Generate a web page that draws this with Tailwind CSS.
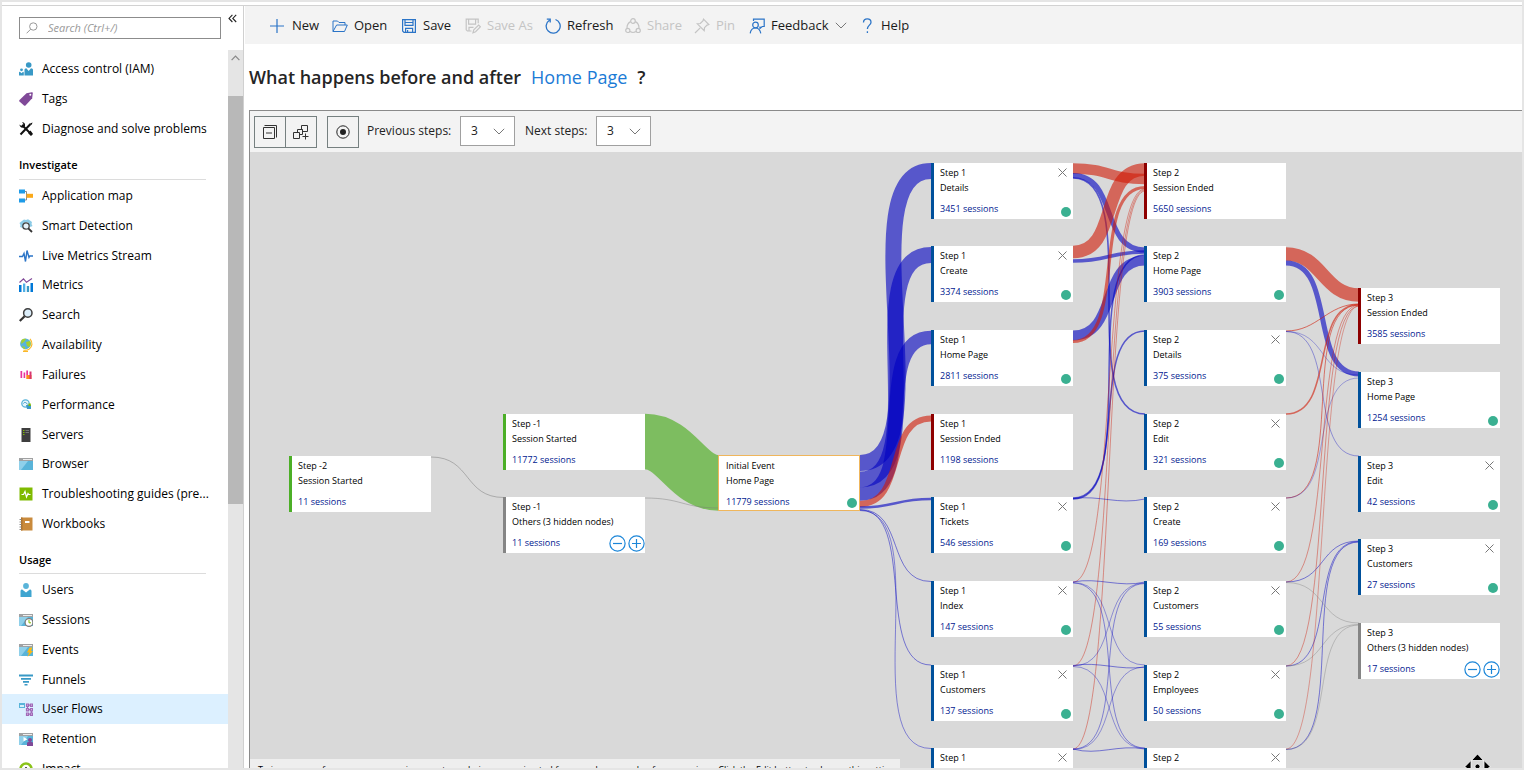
<!DOCTYPE html>
<html lang="en">
<head>
<meta charset="utf-8">
<title>User Flows</title>
<script src="https://cdn.jsdelivr.net/npm/@tailwindcss/browser@4"></script>
</head>
<body class="h-screen overflow-hidden bg-white text-black font-['Open_Sans','Noto_Sans',sans-serif]">
<div class="flex h-full flex-col border-2 border-[#e5e5e5]">
<div class="flex min-h-0 flex-1 flex-col pt-[3px]">
<div class="flex min-h-0 flex-1 border-t border-[#d2d2d2]">

<!-- Sidebar -->
<aside class="flex w-[242px] shrink-0 flex-col border-r border-[#d0d0d0]">
  <div class="flex h-11 shrink-0 items-start">
    <label class="mt-[11px] ml-[17px] flex h-[22px] w-[202px] items-center border border-[#8c8c8c] pl-1.5">
      <svg class="size-3 shrink-0" viewBox="0 0 12 12" fill="none" stroke="#999"><circle cx="7.3" cy="4.5" r="3.7"/><path d="M4.7 7.2L.6 11.3"/></svg>
      <input type="text" aria-label="Search" placeholder="Search (Ctrl+/)" class="ml-2.5 w-full min-w-0 text-[11px] italic outline-none placeholder:text-[#999]">
    </label>
    <button aria-label="Collapse menu" class="mt-2 ml-[7px]"><svg class="size-[9px]" viewBox="0 0 9 9" fill="none" stroke="#222" stroke-width="1.1"><path d="M4.4 .8L1 4.4 4.4 8M8.2 .8L4.8 4.4 8.2 8"/></svg></button>
  </div>
  <div class="flex min-h-0 flex-1">
    <nav class="w-[226px] overflow-hidden text-[12px]">
      <ul class="mt-1 flex h-[90px] flex-col" id="top"></ul>
      <h2 class="mx-[17px] mt-[9px] h-[27px] pt-1 text-[11px] font-semibold leading-4">Investigate</h2>
      <div class="mx-[17px] mr-[22px] -mt-px mb-px h-px bg-[#dcdcdc]"></div>
      <ul class="flex h-[358px] flex-col" id="investigate"></ul>
      <h2 class="mx-[17px] mt-[11px] h-6 pt-[2px] text-[11px] font-semibold leading-4">Usage</h2>
      <div class="mx-[17px] mr-[22px] -mt-px mb-px h-px bg-[#dcdcdc]"></div>
      <ul class="flex h-[209px] flex-col" id="usage"></ul>
    </nav>
    <div class="flex w-[15px] flex-col bg-[#e5e5e5]">
      <div class="flex h-[46px] justify-center pt-[5px]"><svg class="h-[6px] w-[9px]" viewBox="0 0 9 6" fill="none" stroke="#888" stroke-width="1.2"><path d="M.6 5.2L4.5 1.2 8.4 5.2"/></svg></div>
      <div class="h-[408px] bg-[#b8b8b8]"></div>
    </div>
  </div>
</aside>

<main class="ml-px flex min-w-0 flex-1 flex-col">
  <!-- Command bar -->
  <div class="flex h-[38px] shrink-0 items-center bg-[#f3f3f3] pt-px text-[13px] text-[#1a1a1a]">
    <button class="ml-6 flex w-12 items-center gap-[7px] whitespace-nowrap"><svg class="size-4 shrink-0" viewBox="0 0 16 16" fill="none" stroke="#2b74c7" stroke-width="1.2"><path d="M8 1v14M1 8h14"/></svg>New</button>
    <button class="ml-[15px] flex w-[54px] items-center gap-1.5 whitespace-nowrap"><svg class="size-4 shrink-0" viewBox="0 0 16 16" fill="none" stroke="#2b74c7"><path d="M1 13.500V3h4.500L7 4.500h6V7M1 13.500h11.500L15.300 7H4.600L1 13.500z"/></svg>Open</button>
    <button class="ml-[15px] flex w-12 items-center gap-1.5 whitespace-nowrap"><svg class="size-4 shrink-0" viewBox="0 0 16 16" fill="none" stroke="#2b74c7" stroke-width="1.2"><path d="M1.6 1.6h12.8v12.8H3L1.6 13zM4 1.6v5.8h8V1.6M4.6 14.4v-4h7v4M6.6 12v2.4M4.6 4.5h7"/></svg>Save</button>
    <button disabled class="ml-4 flex w-16 items-center gap-1.5 whitespace-nowrap text-[#c4c4c4]"><svg class="size-4 shrink-0" viewBox="0 0 16 16" fill="none" stroke="#c4c4c4" stroke-width="1.2"><path d="M6.5 13H2.4L1.2 11.800V1.200h12v4M3.600 1.200v5h7v-5M4 13V9.400h4.500M8 14.700l.8-3L13.600 7l1.800 1.800-4.800 4.900z"/></svg>Save As</button>
    <button class="ml-4 flex w-16 items-center gap-1.5 whitespace-nowrap"><svg class="size-4 shrink-0" viewBox="0 0 16 16" fill="none" stroke="#2b74c7" stroke-width="1.300"><path d="M4.400 2.200A7 7 0 1 0 10.500 1.500M1.800 1.200h3.400v3.400"/></svg>Refresh</button>
    <button disabled class="ml-4 flex w-[54px] items-center gap-1.5 whitespace-nowrap text-[#c4c4c4]"><svg class="size-4 shrink-0" viewBox="0 0 16 16" fill="none" stroke="#c4c4c4" stroke-width="1.200"><circle cx="8" cy="3" r="2.300"/><circle cx="2.800" cy="12.400" r="2.100"/><circle cx="13.200" cy="12.400" r="2.100"/><path d="M5.700 3.600C3 4.800 2 7 2 10M10.300 3.600C13 4.800 14 7 14 10M5 13.600c2 1.200 4 1.200 6 0"/></svg>Share</button>
    <button disabled class="ml-[15px] flex w-[40px] items-center gap-1.5 whitespace-nowrap text-[#c4c4c4]"><svg class="size-4 shrink-0" viewBox="0 0 16 16" fill="none" stroke="#c4c4c4" stroke-width="1.200"><path d="M9.500 1.200l5.300 5.300-1.700.6-2.600 2.600-.3 3L3.300 5.800l3-.3L8.900 2.900zM6.200 9.800L1 15"/></svg>Pin</button>
    <button class="ml-[15px] flex w-[95px] items-center gap-1.5 whitespace-nowrap"><svg class="size-4 shrink-0" viewBox="0 0 16 16" fill="none" stroke="#2b74c7" stroke-width="1.200"><path d="M4.500 3V1.200h10.700v7.300h-2L11 10.500V8.500"/><circle cx="6.500" cy="7" r="2.800"/><path d="M1.200 15.400c.5-3.600 2.500-5.400 5.300-5.400s4.600 1.800 5.300 5.400"/></svg>Feedback<svg class="h-[7px] w-3 shrink-0" viewBox="0 0 12 7" fill="none" stroke="#777"><path d="M.8.8L6 6 11.200.8"/></svg></button>
    <button class="ml-[15px] flex items-center gap-1.5 whitespace-nowrap"><svg class="size-4" viewBox="0 0 16 16" fill="none" stroke="#2b74c7" stroke-width="1.300"><path d="M4.500 4.500C4.500 2 6 .9 8.200.9S12 2.300 12 4.300C12 7.200 8.400 7.200 8.400 11M8.400 13.200v1.800"/></svg>Help</button>
  </div>

  <h1 class="flex h-[66px] shrink-0 items-center pl-1 text-[18px] font-semibold whitespace-nowrap text-[#252525]">What happens before and after<a href="#" class="ml-2.5 font-normal text-[#1b7bd6]">Home Page</a><span class="ml-2.5">?</span></h1>

  <section class="ml-1 flex min-h-0 flex-1 flex-col border-t border-l border-[#8a8a8a]">
    <!-- Diagram options -->
    <div class="flex h-[41px] shrink-0 items-start bg-[#f3f3f3] pt-[5px] pl-1 text-[12px] text-[#222]">
      <div class="flex">
        <button aria-label="Collapse all" class="flex h-8 w-8 items-center justify-center border border-[#768080]"><svg class="size-4" viewBox="0 0 16 16" fill="none" stroke="#333"><path d="M1.500 3.500h11v11h-11zM2.500 1.500h12v12M4 9h6"/></svg></button>
        <button aria-label="Expand all" class="-ml-px flex h-8 w-8 items-center justify-center border border-[#768080]"><svg class="size-4" viewBox="0 0 16 16" fill="none" stroke="#333"><path d="M.5 8.500h6v6h-6zM4.500 8.500v-3h5v5h-3M9.500 5.500h-1v-4h6v6h-5M12.500 9.500v6M9.500 12.500h6"/></svg></button>
      </div>
      <button aria-label="Recenter" class="ml-2.5 flex h-8 w-8 items-center justify-center border border-[#768080]"><svg class="size-3.5" viewBox="0 0 14 14"><circle cx="7" cy="7" r="6.200" fill="none" stroke="#222"/><circle cx="7" cy="7" r="3" fill="#222"/></svg></button>
      <label for="prev" class="ml-2 w-[85px] whitespace-nowrap leading-[30px]">Previous steps:</label>
      <div class="relative ml-2"><select id="prev" class="h-[30px] w-[55px] appearance-none border border-[#a0a0a0] bg-white pl-2.5"><option>3</option></select><svg class="pointer-events-none absolute top-3 right-2.5 h-[7px] w-3" viewBox="0 0 12 7" fill="none" stroke="#777"><path d="M.8.8L6 6 11.200.8"/></svg></div>
      <label for="next" class="ml-2.5 w-[63px] whitespace-nowrap leading-[30px]">Next steps:</label>
      <div class="relative ml-2"><select id="next" class="h-[30px] w-[55px] appearance-none border border-[#a0a0a0] bg-white pl-2.5"><option>3</option></select><svg class="pointer-events-none absolute top-3 right-2.5 h-[7px] w-3" viewBox="0 0 12 7" fill="none" stroke="#777"><path d="M.8.8L6 6 11.200.8"/></svg></div>
    </div>

    <!-- Flow diagram -->
    <div class="relative min-h-0 flex-1 overflow-hidden bg-[#d9d9d9] text-[9px]">
      <svg class="absolute top-0 left-0 h-[616px] w-[1272px]" viewBox="250 152 1272 616" fill="none" id="edges"></svg>
      <div id="nodes"></div>
      <p class="absolute top-[607px] left-0 h-5 w-[650px] overflow-hidden bg-[#eee] pt-1 pl-2 leading-[14px] whitespace-nowrap">To improve performance, user session counts are being approximated from random sample of user sessions. Click the Edit button to change this setting.</p>
      <svg class="absolute top-[601px] left-[1214px] size-[27px]" viewBox="0 0 27 27" stroke="#fff" stroke-width=".8"><path d="M13.500 1l6 6.500h-12zM1 13.500l6-6v12zM26 13.500l-6-6v12zM13.500 26l6-6.500h-12z"/><circle cx="13.500" cy="13.500" r="2.500"/></svg>
    </div>
  </section>
</main>
</div>
</div>
</div>

<script>
const win = '<path fill="#59b4d9" d="M0 1h14v12H0z"/><path fill="#a0a1a2" d="M0 1h14v3H0z"/><path fill="#eee" d="M4 2h9v1H4z"/><path fill="#8fd0ea" d="M0 4h9L2 13H0z"/>';
const icons = {
  iam: '<g fill="#3999c6"><circle cx="9.700" cy="3" r="2.800"/><path d="M5.500 13.500V8c0-1 .7-1.800 1.800-1.800L9.700 9l2.300-2.800c1.200 0 2 .8 2 1.800v5.500z"/><circle cx="2.500" cy="7.800" r="1.400"/><path d="M0 13.500v-2.800c0-.6.400-1 1-1l1.500 1.500L4 9.700c.5 0 .8.400.8 1v2.800z"/></g>',
  tag: '<path fill="#804998" d="M7.500 1.200L12.800.3c.7 0 1 .4 1 1l-.6 5-6.700 7.200c-.5.500-1 .4-1.500 0L.5 9.500c-.5-.5-.5-1 0-1.500z"/><circle cx="11.300" cy="2.800" r="1" fill="#fff"/>',
  tools: '<path d="M3 3l9.500 9.500M11.500 2L1.500 12.500" stroke="#111" stroke-width="2" fill="none"/><path fill="#111" d="M.5 2.500L2.300 4 4 3.500 4.300 1.800 3 .3C5 0 6.500 1.800 6 4L4.500 5.500C2.500 6 .5 5 .5 2.500zM11 1.500L13.600.4 12.500 3zM9 11l2.500-2.500 2.500 3.500-2 2z"/>',
  map: '<path d="M5 2.500h2.500v8.500H5M7.500 6.800H9" fill="none" stroke="#888"/><path fill="#1e9be8" d="M0 .5h6v4H0zM0 9.500h6v4H0z"/><path fill="#fba919" d="M7.500 4.800H14v4H7.500z"/>',
  smart: '<path fill="#8ccbe6" d="M3 2l2-1.500L7 1l2-.8L11 1.500l2 1.500-.5 2 1 2-2 1-3-5-4 1-1 5L1 8 1.500 6 .5 4z"/><circle cx="7" cy="7" r="3.200" fill="#e6f3fa" stroke="#444" stroke-width="1.300"/><path d="M9.300 9.300L13 13" stroke="#333" stroke-width="1.800"/>',
  live: '<path d="M0 7.500h3.500L5 4.500l1.500 8L8 1.500l2 7 .8-1.500H14" fill="none" stroke="#2b74c7" stroke-width="1.400"/>',
  metrics: '<path fill="#0078d7" d="M0 7h2.500v7H0zM11.500 5H14v9h-2.500z"/><path fill="#50b0e6" d="M4 5.500h2.300V14H4z"/><path fill="#3999c6" d="M7.800 8h2.300v6H7.800z"/><path d="M.5 4.500L4.500.8l3 3.500L13 .5" fill="none" stroke="#804998" stroke-width="1.100"/>',
  search: '<circle cx="8.800" cy="5" r="4.200" fill="#dceefa" stroke="#3e3e3e" stroke-width="1.500"/><path d="M5.600 8.200L.8 13" stroke="#333" stroke-width="2.200"/>',
  globe: '<circle cx="6.500" cy="5.800" r="5.400" fill="#59b4d9"/><path fill="#a4cf30" d="M2.500 2C4 .5 6 .5 7 1L5 4 2 6zM7 4l4-1c1 2 1 4-.5 6L8 8zM3 8l3 1v2C4.500 11 3.500 10 3 8z"/><path d="M11 .8c3 3.500 2.500 8-1 10.400-1.700 1.100-4 1.200-5.500.8" fill="none" stroke="#fbb829" stroke-width="1.200"/><path fill="#fbb829" d="M4 12.800h5V14H4z"/>',
  failures: '<path fill="#e8349c" d="M1.500 3h1.700v7H1.500zM4.600 4.500h1.600V10H4.600zM7.300 2.500H9V7H7.300z"/><path fill="#fb8c1c" d="M7.300 7h5.200v4H7.300z"/><path fill="#d8366e" d="M10.500 3.500h2V11h-2z"/>',
  perf: '<circle cx="6.500" cy="5.500" r="3.700" fill="#e6f5fc" stroke="#59b4d9" stroke-width="1.300"/><path d="M4.500 5.500c1-2 3-1 4 1" fill="none" stroke="#3999c6"/><path fill="#3999c6" d="M7 7h5v4H8z"/><path fill="#7fba00" d="M9.500 5.500h2.300V8H9.500z"/>',
  server: '<path fill="#3e3e3e" d="M2.500 0h9v14h-9z"/><path fill="#7fba00" d="M4 2h1.500v1H4zM4 4h1.500v1H4zM4 6h1.500v1H4z"/><path fill="#777" d="M6.500 2h3.500v1H6.500zM6.500 4h3.500v1H6.500z"/>',
  browser: win,
  guide: '<path fill="#7fba00" d="M.5.500h13v13H.5z"/><path d="M2.500 7.500h2L6 4.500 7.500 10 9 6.500l.7 1h1.800" fill="none" stroke="#fff" stroke-width="1.200"/>',
  book: '<path fill="#c98a3c" d="M2 .5h11.500v13H2z"/><path fill="#b0732a" d="M2 .5h1.500v13H2z"/><path fill="#fff" d="M6 4h4.500v2H6z"/><path d="M.5 2.500h2M.5 5h2M.5 7.500h2M.5 10h2M.5 12.500h2" stroke="#888"/>',
  user: '<circle cx="7" cy="3" r="2.900" fill="#59b4d9"/><path fill="#3fa5d0" d="M1.500 14V8c0-1 .7-1.600 1.700-1.600L7 9.500l3.800-3.100c1 0 1.700.6 1.700 1.600v6z"/>',
  sessions: win + '<circle cx="10" cy="9.500" r="3.900" fill="#fff" stroke="#7a7a7a" stroke-width="1.200"/><path d="M10 7v2.800h2" fill="none" stroke="#7fba00"/>',
  events: win + '<path fill="#fcb714" d="M10.500 4.500h3L12 8h2l-5.500 6 1.500-4.500H8z"/>',
  funnel: '<path fill="#3999c6" d="M0 1.500h14v2H0zM2 5h10v1.800H2zM4 8h6v1.700H4zM5.500 11h3v1.600h-3z"/>',
  flows: '<path fill="#59b4d9" d="M0 1h6v5H0z"/><path fill="#d8eefa" d="M1 3h4v2H1z"/><g fill="#dcc3e6" stroke="#a069b8" stroke-width="1.200"><path d="M7.500 2h2v2.300h-2zM11.500 2h2v2.300h-2zM7.500 6.500h2v2.300h-2zM11.500 6.500h2v2.300h-2zM7.500 11h2v2.300h-2zM11.500 11h2v2.300h-2zM9.500 3.200h2M9.500 7.700h2M9.500 12.200h2M8.500 4.500v2M12.500 8.800v2"/></g>',
  retention: win + '<path fill="#fff" d="M4.500 5l4 2.200-4 2.300z"/><circle cx="11" cy="8" r="2" fill="#804998"/><path fill="#804998" d="M8 14v-2.500c0-1 .5-1.500 1.500-1.500h3c1 0 1.500.5 1.500 1.500V14z"/>',
  impact: '<circle cx="7" cy="7" r="5.500" fill="#fff" stroke="#8bc31a" stroke-width="2.600"/><path d="M7 5v4M5.500 6.500L7 5l1.500 1.500" fill="none" stroke="#555"/>'
};
const item = ([icon, label, active]) => `<li class="flex flex-1"><a href="#" class="flex flex-1 items-center gap-[9px] pl-[17px] whitespace-nowrap ${active ? 'bg-[#dcf0ff]' : ''}"><svg class="size-3.5 shrink-0" viewBox="0 0 14 14">${icons[icon]}</svg>${label}</a></li>`;
const fill = (id, rows) => document.getElementById(id).innerHTML = rows.map(item).join('');
fill('top', [['iam','Access control (IAM)'],['tag','Tags'],['tools','Diagnose and solve problems']]);
fill('investigate', [['map','Application map'],['smart','Smart Detection'],['live','Live Metrics Stream'],['metrics','Metrics'],['search','Search'],['globe','Availability'],['failures','Failures'],['perf','Performance'],['server','Servers'],['browser','Browser'],['guide','Troubleshooting guides (pre...'],['book','Workbooks']]);
fill('usage', [['user','Users'],['sessions','Sessions'],['events','Events'],['funnel','Funnels'],['flows','User Flows',true],['retention','Retention'],['impact','Impact']]);

// Nodes: x, y, step, name, sessions, kind, close button, green dot
const nodes = [
  [39,304,'Step -2','Session Started','11','start'],
  [253,262,'Step -1','Session Started','11772','start'],
  [253,345,'Step -1','Others (3 hidden nodes)','11','others'],
  [468,303,'Initial Event','Home Page','11779','initial',0,1],
  [681,11,'Step 1','Details','3451','page',1,1],
  [681,94,'Step 1','Create','3374','page',1,1],
  [681,178,'Step 1','Home Page','2811','page',0,1],
  [681,262,'Step 1','Session Ended','1198','end'],
  [681,345,'Step 1','Tickets','546','page',1,1],
  [681,429,'Step 1','Index','147','page',1,1],
  [681,513,'Step 1','Customers','137','page',1,1],
  [681,596,'Step 1','Employees','120','page',1,1],
  [894,11,'Step 2','Session Ended','5650','end'],
  [894,94,'Step 2','Home Page','3903','page',0,1],
  [894,178,'Step 2','Details','375','page',1,1],
  [894,262,'Step 2','Edit','321','page',1,1],
  [894,345,'Step 2','Create','169','page',1,1],
  [894,429,'Step 2','Customers','55','page',1,1],
  [894,513,'Step 2','Employees','50','page',1,1],
  [894,596,'Step 2','Index','45','page',1,1],
  [1108,136,'Step 3','Session Ended','3585','end'],
  [1108,220,'Step 3','Home Page','1254','page',0,1],
  [1108,304,'Step 3','Edit','42','page',1,1],
  [1108,387,'Step 3','Customers','27','page',1,1],
  [1108,471,'Step 3','Others (3 hidden nodes)','17','others']
];
const kinds = {
  start: 'border-l-3 border-[#4caf27] pl-[6px]',
  end: 'border-l-3 border-[#8e0000] pl-[6px]',
  page: 'border-l-3 border-[#00509b] pl-[6px]',
  others: 'border-l-3 border-[#858585] pl-[6px]',
  initial: 'border border-[#efb65c] pl-[7px]'
};
document.getElementById('nodes').innerHTML = nodes.map(([x, y, step, name, n, kind, close, dot]) => `
  <article class="absolute h-14 w-[142px] bg-white pt-0.5 leading-[15px] whitespace-nowrap ${kinds[kind]}" style="left:${x}px;top:${y}px">
    <div>${step}</div><div>${name}</div><div class="mt-1.5 text-[#00188f]">${n} sessions</div>
    ${close ? '<button aria-label="Remove" class="absolute top-[5px] right-1.5"><svg class="size-[9px]" viewBox="0 0 9 9" stroke="#777"><path d="M.5.500l8 8M8.500.5l-8 8"/></svg></button>' : ''}
    ${dot ? '<span class="absolute right-0.5 bottom-0.5 size-[10px] rounded-full bg-[#3ab091]"></span>' : ''}
    ${kind === 'others' ? '<div class="absolute right-0 bottom-px flex gap-[2px]"><button aria-label="Show fewer"><svg class="size-[17px]" viewBox="0 0 17 17" fill="none" stroke="#1c86d8" stroke-width="1.200"><circle cx="8.500" cy="8.500" r="7.600"/><path d="M4 8.500h9"/></svg></button><button aria-label="Show more"><svg class="size-[17px]" viewBox="0 0 17 17" fill="none" stroke="#1c86d8" stroke-width="1.200"><circle cx="8.500" cy="8.500" r="7.600"/><path d="M4 8.500h9M8.500 4v9"/></svg></button></div>' : ''}
  </article>`).join('');

// Edges: x1, y1, x2, y2, width, colour, optional handle length
const B = '#0000c2', R = '#d01905', G = '#3faa0f', K = '#777';
const a = 860, b = 931, c = 1073, d = 1145, e = 1286, f = 1359;
const edges = [
  [431,457,504,497.5,.8,K],[645,441.500,719,483,55.500,G,32],[645,498,719,508,.7,K],
  [a,463,b,171,16,B,86],[a,479.500,b,255,15.800,B,76],[a,494,b,337.500,13.500,B,62],[a,504,b,418.500,5.800,R],
  [a,507.500,b,499,2.600,B],[a,509.500,b,581.500,.8,B],[a,510,b,665,.8,B],[a,510.500,b,748.500,.7,B,76],
  [c,168.500,d,179,10.500,R],[c,175.500,d,250,5,B],[c,178,d,414,1.600,B,72],
  [c,252,d,169.500,12.500,R],[c,261,d,252,3.500,B],
  [c,335.500,d,260.500,9.800,B],[c,341.500,d,187.500,3.200,R,56],
  [c,499,d,331,1.500,B],[c,498,d,255,1.500,B],
  [c,582,d,189,.7,R,44],[c,666,d,190,.7,R,44],[c,749,d,191,.7,R,44],
  [c,582.500,d,665,.6,B],[c,583,d,748,.7,B],[c,666,d,583,.6,B],[c,666.500,d,748.500,.6,B],
  [c,749,d,583.500,.7,B],[c,749.500,d,667,.6,B],
  [e,254,f,295,13.500,R,36],[e,263,f,374,5,B],
  [e,331,f,304,1,R,32],[e,331.500,f,375,.5,B],[e,331.500,f,456,.6,B],
  [e,414,f,304.500,1.500,R],[e,498,f,305,.9,R],[e,498,f,378,.5,B],
  [e,582,f,305,.7,R,48],[e,582,f,541,.8,B],[e,666,f,306,.7,R,48],[e,666,f,541.500,.8,B],
  [e,749,f,306,.6,R,44],[e,749.500,f,542,.8,B],
  [e,582.500,f,623,.6,K],[e,666,f,624.500,.6,K],[e,749.500,f,625,.6,K]
];
const wiggles = ['M1073 498.500C1100 495 1118 505 1145 499','M1073 582C1098 577 1120 588 1145 582','M1073 665.500C1098 661 1120 671 1145 667','M1073 749C1098 756 1118 744 1145 749'];
document.getElementById('edges').innerHTML = edges.map(([x1, y1, x2, y2, w, col, h]) => {
  const k = h || 35 + Math.min(Math.abs(y2 - y1), 300) * .14;
  return `<path d="M${x1} ${y1}C${x1 + k} ${y1} ${x2 - k} ${y2} ${x2} ${y2}" stroke="${col}" stroke-width="${w}" stroke-opacity=".6"/>`;
}).join('') + wiggles.map(p => `<path d="${p}" stroke="${B}" stroke-width=".8" stroke-opacity=".6"/>`).join('');
</script>
</body>
</html>
